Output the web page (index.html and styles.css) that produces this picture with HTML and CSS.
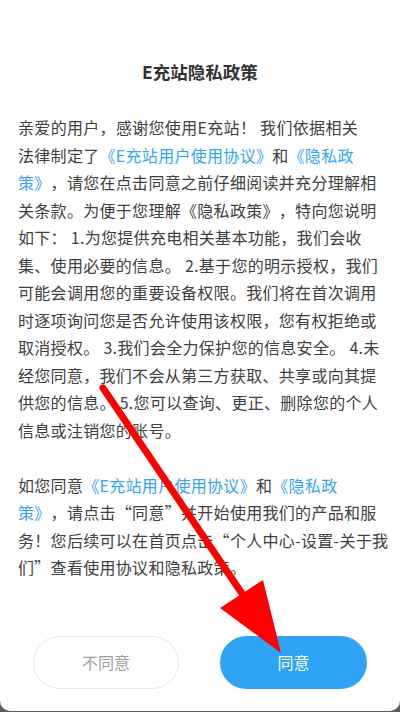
FILE: index.html
```html
<!DOCTYPE html>
<html lang="zh-CN">
<head>
<meta charset="utf-8">
<title>E充站隐私政策</title>
<link rel="stylesheet" href="styles.css">
</head>
<body>
<div class="dialog">
  <h1 class="title">E充站隐私政策</h1>
  <div class="content">
    <p class="para">
      <span class="line line-first">亲爱的用户，感谢您使用E充站！ 我们依据相关</span>
      <span class="line">法律制定了<span class="link">《E充站用户使用协议》</span>和<span class="link">《隐私政</span></span>
      <span class="line"><span class="link">策》</span>，请您在点击同意之前仔细阅读并充分理解相</span>
      <span class="line">关条款。为便于您理解《隐私政策》，特向您说明</span>
      <span class="line">如下： 1.为您提供充电相关基本功能，我们会收</span>
      <span class="line">集、使用必要的信息。 2.基于您的明示授权，我们</span>
      <span class="line">可能会调用您的重要设备权限。我们将在首次调用</span>
      <span class="line">时逐项询问您是否允许使用该权限，您有权拒绝或</span>
      <span class="line">取消授权。 3.我们会全力保护您的信息安全。 4.未</span>
      <span class="line">经您同意，我们不会从第三方获取、共享或向其提</span>
      <span class="line">供您的信息。 5.您可以查询、更正、删除您的个人</span>
      <span class="line">信息或注销您的账号。</span>
    </p>
    <p class="para">
      <span class="line">如您同意<span class="link">《E充站用户使用协议》</span>和<span class="link">《隐私政</span></span>
      <span class="line"><span class="link">策》</span>，请点击“同意”并开始使用我们的产品和服</span>
      <span class="line">务！您后续可以在首页点击“个人中心-设置-关于我</span>
      <span class="line">们”查看使用协议和隐私政策。</span>
    </p>
  </div>
  <div class="actions">
    <button class="btn btn-cancel" type="button">不同意</button>
    <button class="btn btn-ok" type="button">同意</button>
  </div>
  <svg class="arrow" width="400" height="712" viewBox="0 0 400 712" xmlns="http://www.w3.org/2000/svg">
    <line x1="103" y1="388" x2="245" y2="598" stroke="#ff0000" stroke-width="7" stroke-linecap="round"/>
    <polygon points="263,580 220,608 281,653" fill="#ff0000"/>
  </svg>
</div>
</body>
</html>
```
FILE: styles.css
```css
* {
  box-sizing: border-box;
}

html, body {
  margin: 0;
  padding: 0;
}

body {
  width: 400px;
  height: 712px;
  background: #5a5a5a;
  font-family: "Noto Sans CJK SC", "Noto Sans", sans-serif;
  overflow: hidden;
}

.dialog {
  position: relative;
  width: 400px;
  height: 711px;
  background: #ffffff;
  border-radius: 0 0 10px 10px;
  display: flex;
  flex-direction: column;
  padding: 60px 18px 0 18px;
}

.title {
  margin: 0;
  font-size: 17.5px;
  line-height: 24px;
  font-weight: bold;
  color: #333333;
  text-align: center;
}

.content {
  margin-top: 30px;
  display: flex;
  flex-direction: column;
  gap: 27.5px;
}

.para {
  margin: 0;
  font-size: 16px;
  line-height: 27.5px;
  letter-spacing: 0.3px;
  color: #404040;
  text-spacing-trim: space-all;
}

.line {
  display: block;
  white-space: nowrap;
}

.line-first {
  width: 340px;
  text-align: justify;
  text-align-last: justify;
  text-justify: inter-character;
}

.link {
  color: #35a4f5;
}

.actions {
  display: flex;
  justify-content: space-between;
  margin-top: 54px;
  padding: 0 15px;
}

.btn {
  width: 146px;
  height: 53px;
  border-radius: 27px;
  font-family: "Noto Sans CJK SC", "Noto Sans", sans-serif;
  font-size: 16px;
  padding: 0;
  cursor: pointer;
}

.btn-cancel {
  background: #ffffff;
  border: 1px solid #e6e6e6;
  color: #a0a0a0;
}

.btn-ok {
  width: 147px;
  background: #2fa4f7;
  border: none;
  color: #ffffff;
}

.arrow {
  position: absolute;
  left: 0;
  top: 0;
  pointer-events: none;
}
```
